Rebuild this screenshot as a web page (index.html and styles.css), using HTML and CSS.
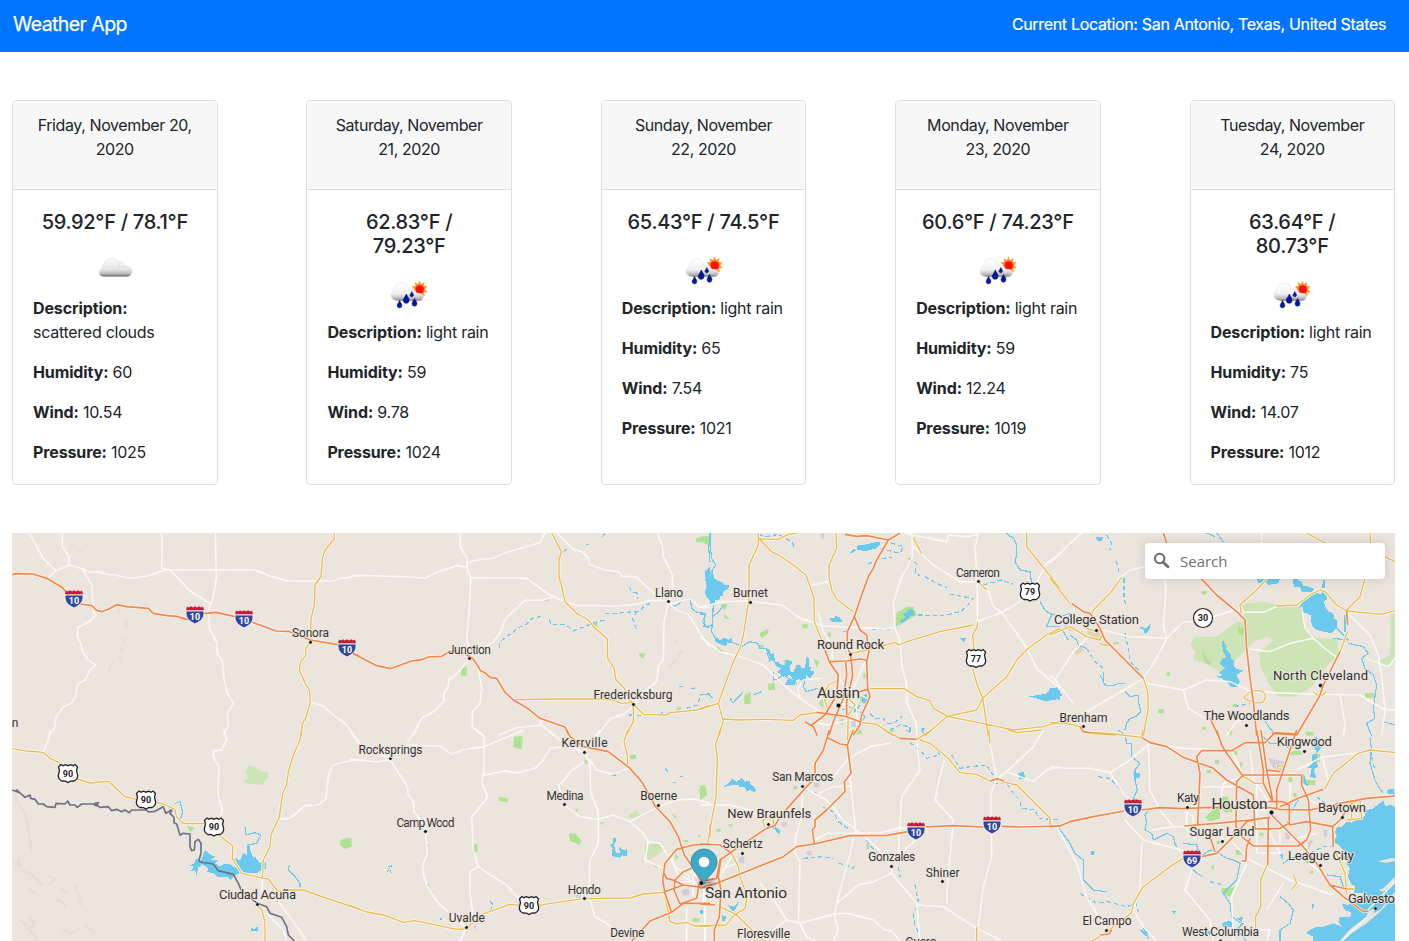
FILE: index.html
```html
<!DOCTYPE html>
<html lang="en">
<head>
<meta charset="utf-8">
<title>Weather App</title>
<link rel="stylesheet" href="styles.css">
</head>
<body>
<svg class="sprite" width="0" height="0" aria-hidden="true">
  <defs>
    <linearGradient id="cloudFill" x1="0" y1="0" x2="0" y2="1">
      <stop offset="0" stop-color="#fafafa"/><stop offset=".6" stop-color="#e6e6e6"/><stop offset=".84" stop-color="#bdbdbd"/><stop offset="1" stop-color="#5c5c5c"/>
    </linearGradient>
    <linearGradient id="rainFill" x1="0" y1="0" x2="0" y2="1">
      <stop offset="0" stop-color="#fff"/><stop offset=".6" stop-color="#f1f1f1"/><stop offset=".85" stop-color="#bbb"/><stop offset="1" stop-color="#777"/>
    </linearGradient>
    <symbol id="cloud" viewBox="0 0 50 50">
      <path transform="translate(.5 .7)" d="M12 29.700C7.600 29.600 7.500 22.700 12 21.300C11.800 17 15 14.500 16.500 13.500C19.500 10 25.500 11.100 27 15C30 13.900 33.500 15.600 34.200 19.300C38 19 41.500 21 41.400 24.300C41.300 28 39 30 36.500 30H14C13 30 12.500 29.900 12 29.700Z" fill="url(#cloudFill)" stroke="#d8d8d8" stroke-width=".5"/>
      <path transform="translate(.5 .7)" d="M27 15Q29 17 29 20M34.200 19.300Q32 19.600 31 21.500" fill="none" stroke="#d2d2d2" stroke-width=".6"/>
    </symbol>
    <symbol id="rain" viewBox="0 0 50 50">
      <path d="M35.500 10.500L37 14.200 40.400 12.100 39.800 16 43.600 16.400 41 19.300 43.600 22 39.800 22.400 41 26.500 37 24.500 35.500 26 31 22 30 19 27.600 16.400 31.500 16 30.600 12.100 34 14.200Z" fill="#ff9a20"/>
      <circle cx="35.500" cy="19" r="4.600" fill="#ff6a1c"/>
      <circle cx="35.800" cy="19.500" r="4" fill="#fb0d10"/>
      <path d="M11 30.200C6 29 6 23.500 9.500 21.500C10 16.500 13 13 17.500 13C22 13 24.500 16.500 25 20C28 17.500 31.500 19.500 32.500 23.500C36 22.500 39.500 24.500 39.400 27C39 30.500 36 31 33 31H14Z" fill="url(#rainFill)" stroke="#ddd" stroke-width=".5"/>
      <g fill="#0018a8" stroke="#070b5c" stroke-width=".6">
        <path d="M22.300 24C23.500 27 25.300 28 25 31A2.900 2.900 0 0 1 19.300 31C19.200 28 21.500 27 22.300 24Z"/>
        <path d="M15.500 30.500C16.500 33 18 33.500 17.800 35.500A2.300 2.300 0 0 1 13.200 35.500C13.200 33.500 15 33 15.500 30.500Z"/>
        <path d="M30.500 28.500C31.500 31 33 31.500 32.900 33.800A2.400 2.400 0 0 1 28.100 33.800C28.100 31.500 29.800 31 30.500 28.500Z"/>
        <path d="M27.800 21.500C28.500 23.500 29.700 24 29.500 25.300A1.800 1.800 0 0 1 26 25.300C26 24 27.300 23.500 27.800 21.500Z"/>
      </g>
    </symbol>
  </defs>
</svg>

<header class="navbar">
  <div class="brand">Weather App</div>
  <div class="location">Current Location: San Antonio, Texas, United States</div>
</header>

<main class="container">
  <section class="forecast">
    <article class="card">
      <div class="card-header">Friday, November 20,<br>2020</div>
      <div class="card-body">
        <h5 class="temp">59.92°F / 78.1°F</h5>
        <svg class="weather-icon"><use href="#cloud"/></svg>
        <p><b>Description:</b><br>scattered clouds</p><p><b>Humidity:</b> 60</p><p><b>Wind:</b> 10.54</p><p><b>Pressure:</b> 1025</p>
      </div>
    </article>
    <article class="card">
      <div class="card-header">Saturday, November<br>21, 2020</div>
      <div class="card-body">
        <h5 class="temp">62.83°F /<br>79.23°F</h5>
        <svg class="weather-icon"><use href="#rain"/></svg>
        <p><b>Description:</b> light rain</p><p><b>Humidity:</b> 59</p><p><b>Wind:</b> 9.78</p><p><b>Pressure:</b> 1024</p>
      </div>
    </article>
    <article class="card">
      <div class="card-header">Sunday, November<br>22, 2020</div>
      <div class="card-body">
        <h5 class="temp">65.43°F / 74.5°F</h5>
        <svg class="weather-icon"><use href="#rain"/></svg>
        <p><b>Description:</b> light rain</p><p><b>Humidity:</b> 65</p><p><b>Wind:</b> 7.54</p><p><b>Pressure:</b> 1021</p>
      </div>
    </article>
    <article class="card">
      <div class="card-header">Monday, November<br>23, 2020</div>
      <div class="card-body">
        <h5 class="temp">60.6°F / 74.23°F</h5>
        <svg class="weather-icon"><use href="#rain"/></svg>
        <p><b>Description:</b> light rain</p><p><b>Humidity:</b> 59</p><p><b>Wind:</b> 12.24</p><p><b>Pressure:</b> 1019</p>
      </div>
    </article>
    <article class="card">
      <div class="card-header">Tuesday, November<br>24, 2020</div>
      <div class="card-body">
        <h5 class="temp">63.64°F /<br>80.73°F</h5>
        <svg class="weather-icon"><use href="#rain"/></svg>
        <p><b>Description:</b> light rain</p><p><b>Humidity:</b> 75</p><p><b>Wind:</b> 14.07</p><p><b>Pressure:</b> 1012</p>
      </div>
    </article>
  </section>

  <section class="map">
    <svg class="map-canvas" viewBox="12 533 1383 408" width="1383" height="408">
      <defs>
        <g id="minor">
          <g transform="translate(0 525) scale(.33333)"><path d="M88 24L128 98 168 138M187 24V65L207 95V120L190 128 168 138 145 158M207 120L250 132 265 140 300 141 315 147 345 150 390 160 440 154 495 135 760 134 810 153 863 168 998 169 1020 160 1045 158 1065 152 1090 152M248 133L275 180 279 240 281 262 289 268 270 288 233 308V335L243 358 247 378 262 402 287 420 268 438 258 462 232 478 228 512 215 535 190 545 168 578 165 605 148 632M482 24L487 45 485 130 510 135 570 198 630 236M646 24L649 160 640 215 625 255 628 310 652 355V388L667 405 672 460 680 498 700 535 682 565 685 600 670 630M931 532L970 543 1000 570 1035 595 1062 630"/></g>
          <g transform="translate(0 730) scale(.33333)"><path d="M150 0L145 30 130 65M672 0L680 30 665 60 640 62V80L657 110 653 190 667 240 658 270 650 310M1080 90L1050 92 998 105 985 140 978 205 955 225 915 227 870 265 838 268M787 440V515M835 515L880 575 920 633M800 550L850 600 860 630M1050 0L1080 40"/></g>
          <g transform="translate(350 525) scale(.33333)"><path d="M0 155L15 151 170 155 225 159 260 142 320 122 352 126M331 24V65L350 98 352 135 362 158 358 260 350 330 358 395M352 115L370 107 435 98 470 82 570 53 585 24M362 158L530 160 600 210 645 230 680 241 800 243 865 237 900 226 955 228M608 217L575 226H525L500 250 465 283 450 325 430 350 375 385M620 24L668 72 695 80 715 98 717 118 765 135 808 140 815 153 860 157 890 185 930 222M922 24L937 60 940 95 967 150V210L955 230 942 290 940 405 925 425 920 470 895 490 850 540M955 232L980 255 1015 268 1060 340 1080 365M955 240L1020 220 1045 245 1080 248M358 400L335 430 315 452 297 463 293 490 283 500 280 530 250 560 215 580 188 630M385 430L395 490 390 535 367 560V605L400 630M445 630L500 608 575 600M570 583L575 600 610 630M850 545L820 568 780 582 745 628"/></g>
          <g transform="translate(350 730) scale(.33333)"><path d="M0 88L80 95 121 90M0 0L30 45 121 86M200 0L172 35M121 90L140 120 172 170 175 195 190 215 192 245 226 290 232 370 218 405 222 440 235 475 265 520 300 550 349 592 330 633M170 45L270 48 305 72 345 58 403 50 480 18 520 0M375 0L403 20 401 130 395 155 413 200 365 262 370 360 385 410 360 425V490L372 580M385 410L430 440 470 465 510 510M401 135L440 128 465 122 500 130 555 115 580 90 600 55 640 50M595 0L640 40 700 67M750 0L703 67 720 100 722 190 745 245V340L720 390 717 500 735 560 770 580 815 620M703 95L660 125 640 155 625 165 635 200M720 90L740 120 790 133 835 115M643 225L690 260 745 268 790 255 840 275 925 230 980 210 1035 207 1080 220M840 275L880 310 895 335 930 340 975 410 1020 440M895 335L885 390 940 415M1005 415L1055 450M975 455H1060M1000 440L1070 480M1030 430V500M1060 400V520M960 370L985 440M1010 633V530M1065 633V480"/></g>
          <g transform="translate(700 525) scale(.33333)"><path d="M0 247L70 230 135 228 245 240 300 280 345 295 370 303 480 308 560 312 585 305M0 335L60 380 120 395 190 420 240 470 300 520 360 560M635 24L638 95 603 160 580 235 585 310 600 345 605 420 620 480M620 480V530L650 600V632M640 65L700 120 780 170 835 170 865 200 880 245 905 262 975 360 1010 430 1080 490M835 24L825 70 832 165V290L905 262 960 230 1000 190 1040 115 1080 85M335 180L385 170M355 262L370 320 395 360 397 405M610 24L740 50 745 30 800 35 835 28M300 520L293 490 310 465 360 460M400 430L430 480 500 520M495 410L465 480 430 540M410 500L480 560M470 540V600M340 590L380 600 480 580"/></g>
          <g transform="translate(700 730) scale(.33333)"><path d="M575 38L510 50 445 85 385 160M0 225L90 225 150 240 215 285M307 170L305 260 285 330 285 370 300 395 295 580M310 172L380 210 430 270 470 300 550 370 574 408 575 430 650 520 660 633M650 30L660 120 605 200 595 370M733 90L715 160 705 210 760 270 740 495 742 522M648 330L590 380M870 40L890 145 873 190 875 380 850 470 835 590M1030 0L1000 50 920 125 893 145M920 125L960 140 1000 155 1040 120 1080 110M445 90L455 190 467 300 450 370 410 520 403 555 415 600 400 633M575 430L520 455 475 465 410 520M650 525L730 530 830 595 905 632M403 552L300 580 260 570 215 500 180 460M300 580L320 620 345 633M403 552L440 550 520 570 555 600 575 603 600 633M260 570L185 625M355 190L400 170 455 168M345 330L380 310 450 310 540 308 600 295 670 290M15 500V633M100 370L60 440M60 420L110 400"/></g>
          <g transform="translate(1050 525) scale(.33333)"><path d="M95 24L60 55 0 115M285 125L240 135 200 165M345 160L348 200 340 300 350 340 320 400 280 460M350 340L400 290 430 290M490 275L560 252M160 315L240 335 350 340M120 330L70 380 15 465 0 450M15 465L70 535M280 460L230 490 110 560M290 475L400 495 470 465 540 470 605 500 680 503 790 508 930 510 1000 553 1035 555M400 495L415 550 480 590M575 262L640 262 690 240M600 372L660 380 720 355 790 340 830 375 865 400M790 340L765 310 755 245M890 262L960 330 985 390 995 450 1005 560 995 632M870 510L885 600 880 632M635 24V54M950 400L1015 425 1035 400M545 245L575 262M530 632L560 590 600 580"/></g>
          <g transform="translate(1050 730) scale(.33333)"><path d="M0 110L50 115 120 115 180 128 240 90 300 40 400 55 520 60M180 128L220 190 270 240M295 30L300 180 330 240 370 290M22 293L80 400 110 500 170 600M225 270L280 330 430 370M275 340L270 480 250 540 280 590 320 633M430 405L405 480 480 570 490 633M545 60L580 140 520 160 510 230M815 75L835 150M740 120L815 82 925 68M600 390L720 450 850 495M590 400L545 500 550 633M620 370H690M770 310V390M700 460L650 540M305 300L370 290 410 290M455 170H550M600 60L610 150 660 220M560 210L600 240 660 240M620 170V370M640 270L690 370M690 290V340M720 160V230M760 200L820 230M410 220V300L440 330M500 290L530 350M530 320L600 390M780 400L830 440M720 330L800 310M630 600L660 600 650 633M405 245L430 260V310"/></g>
        </g>
        <g id="yellow">
          <g transform="translate(0 525) scale(.33333)"><path d="M1003 24V42L975 75 967 100 963 155 945 180 943 240 933 280 931 350 918 370 917 392 902 410 898 435 915 475 928 495 931 530 917 580 907 595 904 632"/></g>
          <g transform="translate(0 730) scale(.33333)"><path d="M37 56L70 62 128 67 150 85 178 98 190 130M232 147L270 159 325 154 375 200 410 208M470 218L490 222 525 238 530 262 552 281 612 281M660 318L698 348 697 385 725 430 790 445 805 447 832 482V518M832 485L865 480H910L960 498 1080 538M904 0L900 30 880 75 865 125 860 165 848 190 838 260 813 315 810 350 790 390 787 445M772 525L785 540 795 575V633"/></g>
          <g transform="translate(350 525) scale(.33333)"><path d="M605 24L634 80 627 105V155L635 185 645 230 680 265 715 285 735 310 772 342 773 400 793 432 797 462 823 490 835 520 850 538M493 524L640 522 730 522 790 525 815 535 850 532M850 538L880 568 950 570 960 563 1040 555 1080 541M850 538V590L830 628"/></g>
          <g transform="translate(350 730) scale(.33333)"><path d="M0 526L50 546 100 555 160 577 195 572 320 598 345 597 400 552 480 523 508 526M567 526L640 514 703 506 840 504 880 492 940 487M833 0L822 35 832 75 833 112M943 490L960 575 980 582 1010 577 1035 588 1080 588M1080 285V320"/></g>
          <g transform="translate(700 525) scale(.33333)"><path d="M175 24V60L147 120V220L130 330 120 370 100 410 60 520 55 535 70 590 55 630M290 24L265 28 235 43 178 42 215 80 240 93 280 120 318 150 342 220 343 290 375 370M408 24L410 70 387 120V155L395 195 412 225 460 260M455 385L490 378 540 365 585 352 595 360 620 350 720 320 820 300M832 290V305L818 330 822 375M818 430L830 475 848 520 865 632M980 24V65L1040 140 1080 190M1080 310L1040 330 985 370 950 405 920 455 848 520 830 555 740 575 675 632M510 491H612L650 515 690 527 700 550 745 575 850 596 940 615 1030 605 1080 590M0 552L55 535M70 582L120 585 200 583 280 586 300 570 370 560M415 465L385 480 370 510 385 560M445 520L465 540 445 570 443 632M485 592L530 598 580 632M640 38L665 85M835 170L860 195"/></g>
          <g transform="translate(700 730) scale(.33333)"><path d="M63 0L47 40 52 90 48 200 30 300 22 345M443 0V40M553 0L600 25M650 28L695 0M660 30L690 40 745 85 780 128 830 133 870 153M905 155L950 165 1050 265 1052 288M867 0L869 40M925 0L950 8 1025 0M195 290Q180 270 200 264T220 275 210 290M0 588L80 585 90 570 107 553 135 535 142 500 120 440 115 410 95 370M60 530L107 553 190 633M830 592V633"/></g>
          <g transform="translate(1050 525) scale(.33333)"><path d="M770 24L825 54M960 24L962 54M945 160L930 215 890 255M890 258L910 260 995 268 1035 257M680 243L740 240 780 210 810 195 825 200 860 240 890 258M1005 95L1035 110M652 160L620 195 570 240 575 275M215 157L180 205 130 255 125 270M0 160L60 235M0 330L60 305 110 335 150 345 155 330M100 290L110 310 140 320M150 355Q165 365 178 358M280 460L293 500 295 550 280 632M590 510Q600 495 625 497T645 520 605 530 590 510M0 592L50 595 90 605M120 625L200 630M790 500L810 515 830 500M893 320L870 380"/></g>
          <g transform="translate(1050 730) scale(.33333)"><path d="M95 5L190 12 275 22 278 0M825 175L850 130 925 70 960 60 1035 68M0 290V265M400 385L360 410 280 470 250 520 245 548 190 590 150 620 125 633M653 400L632 450V530L617 560V600M855 360L885 430 890 490M865 240L930 210 935 265 890 270M905 210V265M580 140L615 160H640M680 130L683 108 710 107M730 435L740 460 725 478M890 477H915"/></g>
        </g>
        <g id="highway">
          <g transform="translate(0 525) scale(.33333)"><path d="M37 150L45 146 100 147 140 160 188 188 205 210M240 237L275 242 290 256 305 260 325 253 350 239 380 245 445 250 460 265 500 272 530 274 560 283 580 280M610 266L648 262 705 275M755 291L828 318 865 319 900 332 931 345 1010 358 1040 375 1080 395"/></g>
          <g transform="translate(350 525) scale(.33333)"><path d="M0 380L80 422 120 431 185 408 215 404 235 396 275 394 300 378 345 386 370 402 392 437 405 443 420 457 440 460 465 502 490 525 530 548 570 580 645 606 656 630"/></g>
          <g transform="translate(350 730) scale(.33333)"><path d="M650 0L660 20 700 50 775 65 840 115 875 155 895 190 915 228 960 275 985 320 1003 375 1040 430 1055 458M1080 342L1030 345 980 358 945 400 938 450 945 490 965 547M845 633L900 573 965 547 1000 520 1080 520M1025 415L1000 425 975 450 972 480 990 522M940 487L1000 465 1080 475M940 425L950 445 975 452 1000 465M990 522L1040 505 1048 460"/></g>
          <g transform="translate(700 525) scale(.33333)"><path d="M435 28L470 34 500 32 565 45 600 24M565 45L530 105 520 130 505 155 485 210 463 275 442 320V365L452 390 458 450 440 530 440 570M463 275L480 315 500 330 507 380 500 410 503 490 510 515 485 570 480 600 460 630M375 375L388 410 440 408 480 402 498 405M388 410L415 450 410 510 375 570 335 600M437 408L440 450 430 520 400 590 387 630M350 562L410 570 440 575 480 590M480 500L503 493M315 590L340 605 352 632"/></g>
          <g transform="translate(700 730) scale(.33333)"><path d="M388 0L370 60 345 100 345 145 320 170 240 260 225 287 200 295 110 355 60 390 50 445 0 455M380 22L420 42 442 45 460 0M442 45L453 130 433 155 435 185 380 240 345 270 345 290 337 300 343 340M0 475L50 460 120 432 250 380 290 350 343 342 450 317 560 316 625 305M677 291L760 287 850 291M905 289L960 291 1080 288M600 25L650 28M870 153L893 146 912 153M0 342L60 345 95 370M63 385L55 440 63 480 58 560 43 600V633M0 522L45 525"/></g>
          <g transform="translate(1050 525) scale(.33333)"><path d="M340 24L350 54M453 160L500 210 560 260 585 285 590 370 600 460 610 530 620 632M65 235L100 260 120 265 150 310 165 345 280 460M890 258L893 300M870 380L850 420 820 480 808 515 740 630 665 625M480 580L505 632M90 605L100 620 125 624"/></g>
          <g transform="translate(1050 730) scale(.33333)"><path d="M275 22L300 38 350 50 400 82 490 115 530 150 610 195 615 300M0 290L30 288 60 275 130 260 222 243M275 240L330 233 400 236 480 232 660 233 690 238 780 240 870 220 950 205 1035 198M500 0L515 45 530 70 580 140M620 0L640 120 640 160 668 215M633 0L650 120 668 210M740 0L700 120 680 180V240M443 285L450 130 440 80 455 62 545 62 585 38 645 38 675 8 740 12M560 155L580 135H755V165L775 210 782 300 770 330 745 348 610 348 575 320 558 290 560 155M403 288L500 280 600 270 660 262M665 255L755 345 800 400 840 465 880 500 940 545 955 543M455 380L500 370 550 320 590 275 615 268M655 265L653 405M655 215H700L718 225V280L690 295 615 297M718 285L770 275 848 290 850 350M690 230L745 205 820 178M848 290L870 270 890 240M600 325L590 350 587 393H575M840 465L890 477M480 320L495 365M150 615L178 612 185 598M650 120L690 125"/></g>
        </g>
        <g id="interstate">
          <path d="M-9-4V-2C-9 3-6 6 0 9C6 6 9 3 9-2V-4Z" fill="#31479e" stroke="#fff" stroke-width=".8"/>
          <path d="M-8-8.500L-6-7.500-4-8.700-2-7.500 0-8.700 2-7.500 4-8.700 6-7.500 8-8.500 9-4.800H-9Z" fill="#c22032"/>
        </g>
        <path id="usroute" d="M-7-9L-5-7.800-2.500-8.800 0-7.800 2.500-8.800 5-7.800 7-9 9.500-6.500 8.500-3 9.700 2Q9.500 6 6 7.500L2.500 7.600 0 9-2.500 7.600-6 7.500Q-9.500 6-9.700 2L-8.500-3-9.500-6.500Z" fill="#fff" stroke="#222" stroke-width="1.300"/>
        <filter id="soft"><feGaussianBlur stdDeviation="2.500"/></filter>
      </defs>

      <rect x="12" y="533" width="1383" height="408" fill="#ece5de"/>
      <g class="relief" transform="translate(0 730) scale(.33333)">
        <path d="M45 400L62 408 55 390M75 425L95 432 110 450 125 465M150 440L165 445 150 462M90 480L105 492M185 478L200 490M175 510L190 518 195 530M225 470L235 490 242 525M85 565L105 575 95 590M60 570L90 600 110 625M190 600L210 612 235 600M45 205L75 250 85 300 95 360M260 590L280 605"/>
      </g>
      <g class="relief" transform="translate(0 525) scale(.33333)"><path d="M235 80H245M357 255V265M380 290L378 305M377 340L373 350M365 370V382M362 398V405M338 412L332 420M330 428L325 440"/></g>
      <g class="relief" transform="translate(350 525) scale(.33333)"><path d="M995 378L985 392M978 405L962 422M980 345V352"/></g>

      <g class="park">
        <g transform="translate(0 730) scale(.33333)"><path class="forest" d="M745 105L770 115 785 125 803 125V145L785 165 755 163 735 160 733 150 745 145 735 125Z"/><path d="M1022 330L1050 322 1055 350 1035 357 1020 345ZM560 285L570 305 585 295Z"/></g>
        <g transform="translate(350 525) scale(.33333)"><path d="M333 428L350 424V452H333ZM730 293H742V305H730ZM582 222H597V227H582ZM1037 40L1065 34H1080V65L1060 52H1038ZM868 385H886L880 400 868 393ZM980 545H992V556H980Z"/></g>
        <g transform="translate(350 730) scale(.33333)"><path d="M492 20L518 18 515 58 490 52ZM445 201L473 205V217L447 212ZM657 312L675 310 693 330 690 346 660 332ZM371 342H382V366H371ZM840 75H858V88H840ZM1047 180L1060 165 1070 190 1055 207ZM703 90H712V101H703ZM965 248L983 262 975 265ZM748 275L762 279 757 286ZM677 236H684V244H677ZM0 325L5 325V350H0ZM1000 330H1015V337H1000ZM1043 316H1052V322H1043ZM975 370L985 380 977 392ZM915 405L925 415 912 410ZM1028 565H1048V575H1028Z"/><path class="forest" d="M835 255L860 240 870 258 840 265ZM885 345L930 340 940 360 900 390 885 380Z"/></g>
        <g transform="translate(700 525) scale(.33333)"><path d="M0 35H25L33 50 28 65 15 52H0ZM178 325L205 312V325L185 340ZM133 510L152 500V537H133ZM62 240L82 235 75 258ZM70 265L90 283 75 280ZM307 298H323V310H307ZM383 323H393V335H383ZM50 362L70 380H52ZM590 262L605 255 620 245 640 245 650 270 625 285 600 300 585 302ZM340 400L358 410 350 428ZM480 510H502V535H482ZM418 585L433 582 428 602ZM205 475H225V495H205ZM355 535L370 520V550ZM250 405H270V425H255ZM490 445H500V460H490ZM570 610H580V622H570ZM175 360H190V372H175ZM470 615H485V627H470Z"/></g>
        <g transform="translate(700 730) scale(.33333)"><path d="M0 168L15 165 22 195 0 210ZM83 285L98 280 95 292ZM280 168H292V178H280ZM467 3H483V13H467ZM500 340H507V358H500ZM50 297H62V305H50ZM5 480H18V488H5Z"/></g>
        <g transform="translate(1050 525) scale(.33333)"><path class="forest" d="M578 238L640 230 690 240 750 242 765 310 800 340 862 340 865 395 840 410 780 490 735 515 685 515 660 480 632 430 628 385 670 345 650 335 610 350 590 375 560 400 535 430 510 440 465 415 430 405 435 380 420 360 435 335 500 335 560 290 585 290ZM1022 265H1035V410L1010 425 985 410 1020 390Z"/><path d="M455 375L485 420 465 415ZM565 305L582 310 578 330 565 325ZM455 198H470V208H455ZM350 442H360V452H350ZM325 553H342V565H325ZM945 505H975V518H945ZM190 352H207V358H190ZM455 605H468V614H455ZM765 620H790V632H770ZM548 537H562V545H548Z"/></g>
        <g transform="translate(1050 730) scale(.33333)"><path d="M465 262L490 238 510 235V265L480 275ZM515 200L535 200 535 225 520 240ZM517 240L550 230 545 247H525ZM515 475L555 472 540 500 515 490ZM545 62H562V75H548ZM495 90H507V103H495ZM720 65L750 60 755 75H720ZM765 150H795V165H765ZM535 0H548L542 20ZM470 120H483V130H470ZM715 140H727V155H715ZM730 190H740V202H730ZM765 390H790V400H768ZM485 405H492V418H485ZM500 333H510V342H500ZM555 360H575V375H560ZM780 423H790V431H780ZM795 72H810V95H798ZM570 97H577V110H570ZM628 308H640V317H628Z"/></g>
      </g>
      <g class="urban">
        <g transform="translate(1050 525) scale(.33333)"><path d="M75 380L90 358 102 378 80 390ZM112 315L155 318 150 340 115 340ZM50 305L68 312 60 320Z"/></g>
        <g transform="translate(350 730) scale(.33333)" fill="#cfcedd"><path d="M995 480L1015 475 1020 495 1000 497ZM675 492H692V504H678ZM370 585L380 590 375 600Z"/></g>
        <g transform="translate(700 730) scale(.33333)" fill="#cfcedd"><path d="M117 380H133V400H117ZM245 277H260V290H245ZM318 363H335V375H320ZM340 158H357V172H342Z"/></g>
        <g transform="translate(700 525) scale(.33333)" fill="#cfcedd"><path d="M363 24H373V42H365ZM453 582H470V605H455Z"/></g>
        <g transform="translate(1050 730) scale(.33333)" fill="#cfcedd"><path d="M655 85L705 95 700 130 670 115ZM765 340L790 330 775 360ZM705 308H720V328H708ZM820 300H832V320H822Z"/></g>
      </g>

      <g class="lake">
        <g transform="translate(0 730) scale(.33333)"><path d="M565 408L580 402 590 385 598 392 605 388 612 365 620 362 630 375 645 380 632 390 655 390 645 400 660 410 672 402 690 403 700 410 715 415 720 428 705 437 690 450 680 440 650 440 640 430 622 425 625 415 605 402 600 412 595 410 590 435 585 420 572 425 582 410ZM703 385L720 390 730 370 740 375 740 345 748 345 752 365 760 385 765 380 780 400 790 392 798 398V415L785 420 770 430 735 430 720 415ZM752 592L762 597 772 590 775 604H752Z"/></g>
        <g transform="translate(350 525) scale(.33333)"><path d="M1065 140L1080 125V165L1067 160ZM1065 195L1080 205V225L1068 215Z"/></g>
        <g transform="translate(350 730) scale(.33333)"><path d="M780 345L790 340 788 325 795 322 800 330 792 345 798 370 810 370 807 350 820 360 830 358V378L815 376 810 383 785 378 788 355Z"/></g>
        <g transform="translate(700 525) scale(.33333)"><path d="M15 160L22 150 28 158 38 135 42 160 50 165 62 170 72 180 88 180V188L70 200 68 212 60 215 58 225 45 225 47 240 28 242 30 225 22 210 15 200 20 185ZM450 82L460 72 470 75 470 62 500 58 520 53 540 50V58L530 70 500 78 470 75 455 85ZM45 335L60 345 75 338 85 345 95 340V355L82 352 78 363 65 360 45 350ZM388 278H405V273L420 278 427 290H395ZM610 265L620 262 630 250 640 255 645 270 630 275 620 285 605 295 600 288 615 278ZM985 515L1015 510 1040 505 1050 490 1062 498 1080 495V525L1065 522 1040 530 1010 520ZM195 370L210 375 212 388 222 385 225 410 235 410 240 418 255 420 260 405 275 408V415L268 425 272 440 280 442 290 420 300 420 305 430 315 428 320 395 328 400V425L335 430 328 435 345 440 330 460 320 450 313 470 305 475 300 462 290 465 285 480 255 480 265 460 280 465 270 450 250 455 232 440 245 430 230 425 218 405 205 410 210 395ZM485 510L500 508V535L485 530ZM780 340L800 338 790 352ZM460 545L480 540 475 565 462 560ZM663 608H675L668 625Z"/></g>
        <g transform="translate(700 730) scale(.33333)"><path d="M70 172L90 155 95 145 110 155 125 145 135 155 150 152 152 165 160 168 168 180 165 188 150 180 140 185 135 172 120 172 115 165 95 165ZM955 130L970 125 978 148H957ZM82 525L100 530 118 515 108 535 100 545ZM225 290L240 300V312L228 305ZM65 555L78 560 75 572 65 572ZM0 540H10V553H0Z"/></g>
        <g transform="translate(1050 525) scale(.33333)"><path d="M750 245L755 230 765 225 770 215 785 212 795 200 812 207 820 200 833 208 830 225 822 228 825 245 835 260 850 265 852 280 862 285 860 310 845 323 835 323 800 315 785 300 782 270 755 260ZM515 350L520 348 530 365 528 375 540 385 545 405 552 405 552 425 560 432 580 437 572 442 560 450 570 470 560 485 545 488 530 470 515 460 500 455 520 450 505 443 525 430 510 415 518 400 530 400 520 380ZM727 160L742 163 755 170 760 182 775 185 793 192 785 200 755 200 750 185 732 185ZM138 37H160L155 47H142ZM265 305L290 310 303 295 298 315 285 328 280 315ZM0 490L20 487 37 510 15 525 0 525ZM620 160L690 160 685 175 655 180 645 168 625 175ZM820 165H825V190H815Z"/></g>
        <g transform="translate(1050 730) scale(.33333)"><path d="M1040 235L1025 225 1005 228 1000 212 985 222 970 235 950 240 945 255 935 270 920 268 905 278 890 275 875 290 862 290 855 305 860 320 850 335 865 345 880 360 890 385 890 400 900 415 893 440 903 460 915 470 912 488 945 490 935 505 930 512 912 512 895 525 875 520 885 540 905 548 900 562 870 560 865 575 875 590 850 580 820 590 800 590 780 600 770 610 790 620 790 640H1040ZM795 20L805 25 805 42 815 50 800 70 803 110 790 120 800 145 780 140 785 115 770 115 788 100 785 75 800 70 790 45ZM760 130L775 170 760 160ZM1030 175L1010 180V190L1035 195ZM515 580L540 572 550 582 545 592H520ZM560 565L580 560 575 575ZM122 362L135 365 130 375H123ZM365 545L378 542 375 553ZM785 520L793 525 788 540ZM690 375L700 370 698 390ZM250 130H270L268 145H255ZM270 600L300 605 285 618ZM460 605L490 600 480 615Z"/></g>
      </g>
      <g class="island" transform="translate(1050 730) scale(.33333)">
        <path d="M870 633L900 598 930 575 950 560 955 542 975 537 970 550 990 540 1035 485V498L990 545 950 580 905 610 880 633Z"/>
        <path d="M1035 385L1020 385 1000 390 985 395 1010 398 1035 393ZM1035 440L1000 475 985 480 1000 485 1035 458Z"/>
      </g>
      <path class="shoal" d="M1395 882L1368 910M1367 917L1341 941"/>

      <g class="river">
        <g transform="translate(0 730) scale(.33333)"><path d="M525 220L540 215 548 245 540 275M735 290L738 315 755 310 765 308 783 315 770 340 745 345 740 390M868 405L865 420 885 440 900 460V472M495 220L520 245"/></g>
        <g class="broken" transform="translate(350 525) scale(.33333)"><path d="M448 368L450 350 475 330 490 322 500 310 530 298 540 283 575 273M598 283L603 298 650 300 670 318 735 292 765 285M765 265H800L870 258 885 240 905 235M860 260L848 280 860 315M838 185L845 200 862 205V222M640 80L650 72M708 58H716M757 35L765 26M838 570L880 572 950 562M988 485H1000M1022 492 1040 487M1010 550L1045 540 1050 510 1080 505"/></g>
        <g transform="translate(350 525) scale(.33333)"><path d="M960 235L975 245 1000 225 1020 218 1025 250 1040 262 1065 265 1062 305 1080 307M1075 60L1080 110"/></g>
        <g class="broken" transform="translate(350 730) scale(.33333)"><path d="M115 410L125 408 122 425 133 437M113 425L118 415M233 342V350M235 462V468M260 517L265 520M270 567H275M785 135H797M945 115L955 125M968 158H978M990 140H998M420 515L430 525 420 545"/></g>
        <g transform="translate(700 525) scale(.33333)"><path d="M0 267H18L8 290 20 305 38 298V275L55 262 70 240M40 240L35 320 50 345 60 355M30 24L30 60 35 100 47 120 30 145M90 348L125 365 150 350 175 355 180 370 200 370 205 395 225 410M220 440V465L235 460 250 450 290 475M0 510L25 508 40 520 M90 520L100 533 130 500M160 510L185 500M315 460L310 485 318 500 355 490M920 24L930 35 940 38 950 60V90L945 110 960 135 990 140 995 175M1020 230L1035 255 1055 270 1040 305 1080 305M480 560L495 575 480 600"/></g>
        <g class="broken" transform="translate(700 525) scale(.33333)"><path d="M175 28L200 35 235 28 275 50 283 68M505 117L545 100 575 98M540 70L600 85 610 65 560 50M625 100L650 115 645 145 660 152M675 155L700 170 740 188M750 208L820 220 800 245 780 260 730 272 655 270M428 320H440M515 312L570 312 590 300M850 180L905 165 940 178M510 565L525 580 550 580 560 595 580 595 605 575M425 555L460 545M570 615L600 600 630 605V625"/></g>
        <g class="broken" transform="translate(700 730) scale(.33333)"><path d="M630 38L660 60 680 85 720 75 710 60 745 85M755 75L780 115 810 110 860 105 875 130 890 140M880 160L920 160 940 190 960 210 965 235 1005 240 1015 265 1080 270M370 232L400 245 415 275 450 300M500 330L510 345 530 370M310 385L370 380 400 387M415 400L440 405 460 415 468 400M595 410L600 440M645 465L655 515M650 530L640 550 645 590 655 605M320 180L350 190M620 0L635 10M665 0L675 15M220 293L240 310"/></g>
        <g transform="translate(1050 525) scale(.33333)"><path d="M850 340L895 345 860 310M895 355L940 365 955 385 935 400 945 430 970 450 980 480 970 550 975 580 950 595 965 632M885 270V320M60 330L80 345 85 360 110 370M0 265L30 275 60 265 40 320 55 345M500 24L520 50M470 24L495 35M150 450L165 480 190 482 205 475 225 475M160 440V470M225 500L240 515 265 510 265 530 272 560 258 575 240 580 230 595 225 615M640 580L660 610 680 630M1000 590L1035 600"/></g>
        <g class="broken" transform="translate(1050 525) scale(.33333)"><path d="M170 30L185 55 180 75M197 108L205 125 207 145M222 160V190L222 220 230 245M110 370L135 410 160 430M225 325L235 370 240 410 265 435M555 545L600 535"/></g>
        <g transform="translate(1050 730) scale(.33333)"><path d="M205 0L225 15 230 40 245 40 245 80 270 100 255 120 255 150 262 180 250 205 270 220 275 235 295 240 285 255 290 275 285 300 305 310 310 330 330 320 350 310 370 320 375 340 380 350M400 340L440 345 450 380 480 360 500 365 530 385 550 390 570 400 560 450 520 490 540 520 545 560 575 580 560 610M25 293L60 340 75 370 100 390 100 450 130 480 170 485M425 415L440 430 460 440M640 20L660 40 700 40 720 60M670 210L600 230M960 24L965 60 960 100 975 150 985 170 1000 190M850 630L830 590M690 500L715 520 730 540 720 580 690 600V633M745 210L720 250 710 290M700 400L720 385 760 380M830 435L870 440 880 470M580 580L560 600 590 633"/></g>
        <g class="broken" transform="translate(1050 730) scale(.33333)"><path d="M145 140L180 145 210 175M90 490L140 520 170 515 230 530 260 520 265 545M480 455L520 465M280 595L300 633M780 370L820 350 850 350M800 200L840 230M960 60L975 120"/></g>
      </g>

      <g transform="translate(0 730) scale(.33333)"><path class="boundary" d="M37 180L55 187 50 180 75 202 90 195 92 205 105 208 115 222 130 222 140 230 165 232 168 220 195 222 203 213 210 225 225 225 232 232 245 222 280 222 290 228 295 218 285 220 300 232 325 230 335 242 350 238 365 245 375 240 388 248 395 240 440 240 445 246 465 244 490 230 497 250 515 240 510 250 522 262 522 278 530 282 540 315 550 310 570 312 570 350 575 362 583 360 585 335 595 328 603 340 603 370 597 390 600 396 640 402 655 422 700 433 715 460 725 483 772 520 800 530 810 550 845 562 860 590 865 615 883 633"/></g>

      <use href="#minor" class="minor"/>
      <use href="#yellow" class="casing"/><use href="#yellow" class="yellow"/>
      <use href="#highway" class="casing"/><use href="#highway" class="highway"/>

      <g class="dots">
        <circle cx="310.500" cy="642.300" r="1.700"/><circle cx="469.500" cy="658.500" r="1.700"/><circle cx="668.500" cy="601.500" r="1.700"/><circle cx="750.500" cy="602.500" r="1.700"/><circle cx="978.500" cy="581.500" r="1.700"/><circle cx="633.500" cy="704.500" r="1.700"/><circle cx="850.500" cy="654.500" r="1.700"/><circle cx="838.500" cy="705.500" r="2.300"/><circle cx="1096.500" cy="630.500" r="1.700"/><circle cx="1320.500" cy="685.500" r="2"/><circle cx="1083.500" cy="726.500" r="1.700"/><circle cx="1246.500" cy="725.500" r="1.700"/><circle cx="1304.500" cy="751.500" r="1.700"/><circle cx="390.500" cy="758.500" r="1.700"/><circle cx="584.500" cy="752.500" r="1.700"/><circle cx="564.500" cy="804.500" r="1.700"/><circle cx="658.500" cy="805.500" r="1.700"/><circle cx="425.500" cy="831.500" r="1.700"/><circle cx="584.500" cy="898.500" r="1.700"/><circle cx="466.500" cy="927.500" r="1.700"/><circle cx="802.500" cy="786.500" r="1.700"/><circle cx="768.500" cy="824.500" r="1.700"/><circle cx="742.500" cy="853.500" r="1.700"/><circle cx="891.500" cy="866.500" r="1.700"/><circle cx="942.500" cy="881.500" r="1.700"/><circle cx="1187.500" cy="807.500" r="1.700"/><circle cx="1271.500" cy="812.500" r="2.300"/><circle cx="1342.500" cy="817.500" r="1.700"/><circle cx="1222.500" cy="841.500" r="1.700"/><circle cx="1320.500" cy="865.500" r="1.700"/><circle cx="1375.500" cy="908.500" r="1.700"/><circle cx="1106.500" cy="930.500" r="1.700"/><circle cx="1220.500" cy="941" r="1.700"/><circle cx="257.500" cy="904.500" r="1.700"/><circle cx="701.500" cy="883" r="2.300"/>
      </g>
      <g class="labels">
        <text x="15" y="727">n</text>
        <text x="310.500" y="637" textLength="37">Sonora</text>
        <text x="469.500" y="653.500" textLength="43">Junction</text>
        <text x="669" y="596.500" textLength="28">Llano</text>
        <text x="750.500" y="597" textLength="35">Burnet</text>
        <text x="978" y="577" textLength="44">Cameron</text>
        <text x="633" y="699" textLength="79">Fredericksburg</text>
        <text class="town" x="850.500" y="649" textLength="67">Round Rock</text>
        <text class="city" x="838.500" y="697.500" textLength="43">Austin</text>
        <text class="town" x="1096.500" y="624" textLength="85">College Station</text>
        <text class="town" x="1320.500" y="679.500" textLength="95">North Cleveland</text>
        <text x="1083.500" y="721.500" textLength="48">Brenham</text>
        <text class="town" x="1246.500" y="719.500" textLength="86">The Woodlands</text>
        <text class="town" x="1304.300" y="745.500" textLength="55">Kingwood</text>
        <text x="390.500" y="753.500" textLength="64">Rocksprings</text>
        <text x="584.500" y="746.500" textLength="46">Kerrville</text>
        <text x="565" y="799.500" textLength="37">Medina</text>
        <text x="658.700" y="800" textLength="37">Boerne</text>
        <text x="425.500" y="826.500" textLength="58">Camp Wood</text>
        <text x="584.300" y="893.500" textLength="33">Hondo</text>
        <text x="466.800" y="921.500" textLength="36">Uvalde</text>
        <text x="627.300" y="936.500" textLength="34">Devine</text>
        <text x="802.700" y="781" textLength="61">San Marcos</text>
        <text class="town" x="769.300" y="818" textLength="84">New Braunfels</text>
        <text x="742.700" y="848" textLength="40">Schertz</text>
        <text class="city" x="746" y="898" textLength="82">San Antonio</text>
        <text x="891.700" y="861" textLength="47">Gonzales</text>
        <text x="942.700" y="876.500" textLength="34">Shiner</text>
        <text x="763.500" y="938" textLength="53">Floresville</text>
        <text x="921" y="945.500" textLength="31">Cuero</text>
        <text x="1188" y="801.500" textLength="22">Katy</text>
        <text class="city" x="1239.500" y="808.500" textLength="56">Houston</text>
        <text class="town" x="1342" y="811.500" textLength="48">Baytown</text>
        <text class="town" x="1222" y="836" textLength="65">Sugar Land</text>
        <text class="town" x="1321" y="859.500" textLength="66">League City</text>
        <text class="town" x="1371.500" y="903" textLength="47">Galvesto</text>
        <text x="1107" y="925" textLength="49">El Campo</text>
        <text x="1220.500" y="936" textLength="77">West Columbia</text>
        <text class="town" x="257.500" y="899" textLength="77">Ciudad Acuña</text>
      </g>
      <g class="shields white">
        <g transform="translate(74 599)"><use href="#interstate"/><text y="4.500">10</text></g>
        <g transform="translate(195 615)"><use href="#interstate"/><text y="4.500">10</text></g>
        <g transform="translate(244 619)"><use href="#interstate"/><text y="4.500">10</text></g>
        <g transform="translate(347 648)"><use href="#interstate"/><text y="4.500">10</text></g>
        <g transform="translate(916 831)"><use href="#interstate"/><text y="4.500">10</text></g>
        <g transform="translate(992 825)"><use href="#interstate"/><text y="4.500">10</text></g>
        <g transform="translate(1133 808)"><use href="#interstate"/><text y="4.500">10</text></g>
        <g transform="translate(1192 859)"><use href="#interstate"/><text y="4.500">69</text></g>
      </g>
      <g class="shields">
        <g transform="translate(68 773.500)"><use href="#usroute"/><text y="3.300">90</text></g>
        <g transform="translate(146 800)"><use href="#usroute"/><text y="3.300">90</text></g>
        <g transform="translate(214 827)"><use href="#usroute"/><text y="3.300">90</text></g>
        <g transform="translate(529 905.500)"><use href="#usroute"/><text y="3.300">90</text></g>
        <g transform="translate(1030 592)"><use href="#usroute"/><text y="3.300">79</text></g>
        <g transform="translate(976 658.500)"><use href="#usroute"/><text y="3.300">77</text></g>
        <g transform="translate(1203 618)"><circle r="9.500" fill="#fff" stroke="#222" stroke-width="1.200"/><text y="3.300">30</text></g>
      </g>

      <ellipse cx="706" cy="883" rx="9" ry="3.500" fill="#333" opacity=".45" filter="url(#soft)"/>
      <path d="M704 883.500C701.500 877 691 871.500 691 862A13 13 0 0 1 717 862C717 871.500 706.500 877 704 883.500Z" fill="#3ea9c6" stroke="#318aa3" stroke-width=".9"/>
      <circle cx="704" cy="862" r="5.300" fill="#fff"/>
    </svg>
    <div class="search">
      <svg class="search-icon" width="18" height="18" viewBox="0 0 18 18"><circle cx="6.700" cy="6.500" r="4.700" fill="none" stroke="#6b6b6b" stroke-width="2"/><path d="M10.200 10.200L15 14.800" stroke="#6b6b6b" stroke-width="2.700" stroke-linecap="round"/></svg>
      <span>Search</span>
    </div>
  </section>
</main>
</body>
</html>
```
FILE: styles.css
```css
* { box-sizing: border-box; }
html, body { margin: 0; height: 941px; overflow: hidden; }
body { background: #fff; color: #212529; font: 16px/24px Inter, "Open Sans", sans-serif; letter-spacing: -0.3px; }
.sprite { position: absolute; }
.navbar { height: 52px; background: #0275ff; color: #fff; display: flex; align-items: center; justify-content: space-between; padding: 0 23px 4px 13px; white-space: nowrap; }
.brand { font-size: 19.5px; letter-spacing: -0.57px; -webkit-text-stroke: .25px #fff; }
.location { letter-spacing: -0.33px; -webkit-text-stroke: .2px #fff; }
.container { padding: 48px 14px 0 12px; }
.forecast { display: grid; grid-template-columns: repeat(5, 205.5px); justify-content: space-between; }
.card { height: 385px; border: 1px solid #dfdfdf; border-radius: 4px; overflow: hidden; }
.card-header { height: 89px; padding: 12px 0; background: #f7f7f7; border-bottom: 1px solid #dfdfdf; text-align: center; white-space: nowrap; letter-spacing: -0.4px; }
.card-body { padding: 20px 20px 0; white-space: nowrap; }
.temp { margin: 0 -15px 12px; font-size: 20px; line-height: 24px; font-weight: 500; text-align: center; }
.weather-icon { display: block; width: 50px; height: 50px; margin: 0 auto; }
.card p { margin: 0 0 16px; letter-spacing: -0.27px; }
.card b { font-weight: 700; letter-spacing: -0.12px; }

.map { position: relative; height: 408px; margin-top: 48px; overflow: hidden; background: #ece5de; }
.map-canvas { display: block; }
.minor, .yellow, .highway, .casing { fill: none; stroke-linejoin: round; stroke-linecap: butt; }
.minor { stroke: #fbf9f7; stroke-width: 4.5px; }
.casing { stroke: #fbf6ee; stroke-width: 9px; }
.yellow { stroke: #e9bc50; stroke-width: 4px; }
.highway { stroke: #f1874a; stroke-width: 5px; }
.park { fill: #aee192; }
.forest { fill: #cce4b6; }
.urban { fill: #dfd6b0; }
.lake { fill: #6bc9ee; shape-rendering: crispEdges; }
.river { fill: none; stroke: #6bc9ee; stroke-width: 3.6px; stroke-linejoin: bevel; shape-rendering: crispEdges; }
.broken { stroke-dasharray: 13 9; }
.island { fill: #ece5de; }
.shoal { fill: none; stroke: #f7f5f1; stroke-width: 1.5px; }
.relief { fill: none; stroke: #dfd6c7; stroke-width: 7px; opacity: .5; stroke-linejoin: round; stroke-linecap: round; }
.boundary { fill: none; stroke: #6d7186; stroke-width: 5px; stroke-linejoin: round; }
.labels text { font: 12px Roboto, "Noto Sans", sans-serif; fill: #333; text-anchor: middle; letter-spacing: 0; paint-order: stroke; stroke: #ece5de; stroke-opacity: .85; stroke-width: 2px; stroke-linejoin: round; }
.labels .town { font-size: 13px; }
.labels .city { font-size: 15.5px; }
.dots { fill: #000; stroke: #f4efe9; stroke-width: .5px; }
.shields text { font: 700 9px Roboto, "Noto Sans", sans-serif; text-anchor: middle; fill: #222; letter-spacing: .2px; }
.shields.white text { fill: #fff; }
.search { position: absolute; top: 10px; right: 10px; width: 240px; height: 36px; display: flex; align-items: center; gap: 9px; padding-left: 8px; background: #fff; border-radius: 4px; box-shadow: 0 0 10px 2px rgba(0, 0, 0, .1); color: #6f6f6f; font: 15px/20px "Open Sans", sans-serif; letter-spacing: 0; }
```
